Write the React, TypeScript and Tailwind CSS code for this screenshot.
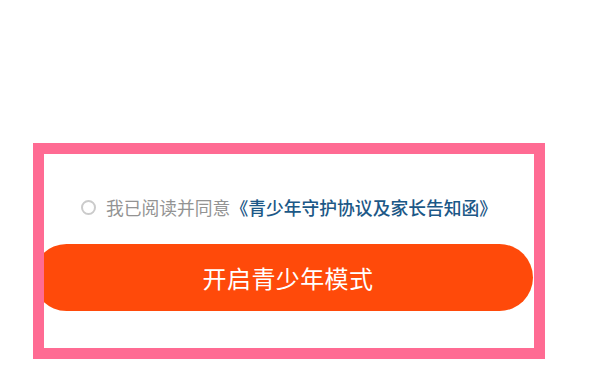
import React from "react";

export default function App() {
  return (
    <div className="w-[600px] h-[373px] bg-white overflow-hidden" style={{ fontFamily: '"Noto Sans CJK SC", "Noto Sans", sans-serif' }}>
      <div className="pt-[143px] pl-[33px]">
        <div className="w-[512px] h-[216px] border-[11px] border-[#ff6b93] bg-white overflow-hidden">
          <div className="flex flex-col items-center pt-[41px]">
            <div className="flex items-center h-[24px] text-[17.8px] leading-[24px] whitespace-nowrap">
              <span className="w-[15px] h-[15px] rounded-full border-2 border-[#cbcbcb] mr-[10px] shrink-0" />
              <span className="text-[#939393]">我已阅读并同意</span>
              <span className="text-[#1c5887] font-medium">《青少年守护协议及家长告知函》</span>
            </div>
          </div>
          <div className="mt-[25px] ml-[-11px] w-[500px] h-[67px] rounded-full bg-[#ff4a0a] flex items-center justify-center pl-[10px]">
            <span className="text-white text-[24px] leading-none tracking-[0.4px]">开启青少年模式</span>
          </div>
        </div>
      </div>
    </div>
  );
}
